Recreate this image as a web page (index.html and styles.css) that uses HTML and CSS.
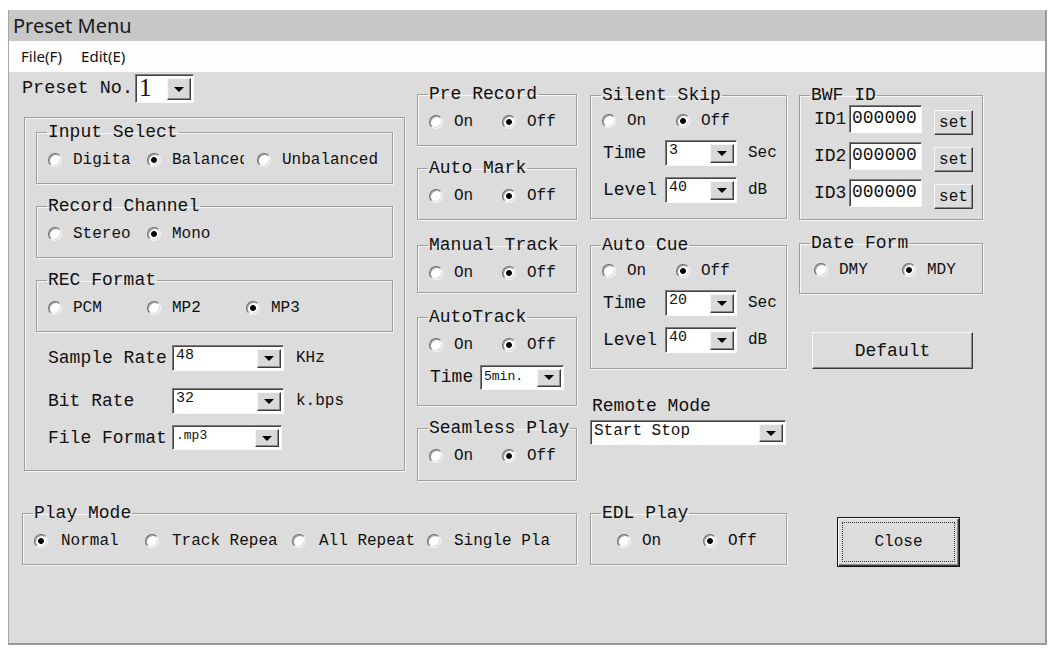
FILE: index.html
```html
<!DOCTYPE html>
<html lang="en">
<head>
    <meta charset="UTF-8">
    <meta name="viewport" content="width=device-width, initial-scale=1.0">
    <title>Preset Menu</title>
    <link rel="stylesheet" href="styles.css">
</head>
<body>
<div class="window">
    <div class="titlebar">Preset Menu</div>
    <div class="menubar"><span>File(F)</span><span>Edit(E)</span></div>

    <div class="client">
        <div class="top">
            <!-- left column -->
            <div class="col col-left">
                <div class="preset">
                    <span class="preset-label">Preset No.</span>
                    <div class="combo combo-preset"><span class="val">1</span><span class="drop"></span></div>
                </div>
                <div class="panel">
                    <fieldset class="grp">
                        <legend>Input Select</legend>
                        <div class="row">
                            <label class="opt w-digital"><input type="radio" name="input"><span>Digital</span></label>
                            <label class="opt w-balanced"><input type="radio" name="input" checked><span>Balanced</span></label>
                            <label class="opt"><input type="radio" name="input"><span>Unbalanced</span></label>
                        </div>
                    </fieldset>
                    <fieldset class="grp">
                        <legend>Record Channel</legend>
                        <div class="row">
                            <label class="opt w99"><input type="radio" name="channel"><span>Stereo</span></label>
                            <label class="opt"><input type="radio" name="channel" checked><span>Mono</span></label>
                        </div>
                    </fieldset>
                    <fieldset class="grp">
                        <legend>REC Format</legend>
                        <div class="row">
                            <label class="opt w99"><input type="radio" name="format"><span>PCM</span></label>
                            <label class="opt w99"><input type="radio" name="format"><span>MP2</span></label>
                            <label class="opt"><input type="radio" name="format" checked><span>MP3</span></label>
                        </div>
                    </fieldset>

                    <div class="field-row fr-sample">
                        <span class="field-label">Sample Rate</span>
                        <div class="combo combo-rate"><span class="val">48</span><span class="drop"></span></div>
                        <span class="unit">KHz</span>
                    </div>
                    <div class="field-row fr-bit">
                        <span class="field-label">Bit Rate</span>
                        <div class="combo combo-rate"><span class="val">32</span><span class="drop"></span></div>
                        <span class="unit">k.bps</span>
                    </div>
                    <div class="field-row fr-file">
                        <span class="field-label">File Format</span>
                        <div class="combo combo-file"><span class="val">.mp3</span><span class="drop"></span></div>
                    </div>
                </div>
            </div>

            <!-- second column -->
            <div class="col col-mid">
                <fieldset class="grp">
                    <legend>Pre Record</legend>
                    <div class="row">
                        <label class="opt w73"><input type="radio" name="pre"><span>On</span></label>
                        <label class="opt"><input type="radio" name="pre" checked><span>Off</span></label>
                    </div>
                </fieldset>
                <fieldset class="grp g-automark">
                    <legend>Auto Mark</legend>
                    <div class="row">
                        <label class="opt w73"><input type="radio" name="mark"><span>On</span></label>
                        <label class="opt"><input type="radio" name="mark" checked><span>Off</span></label>
                    </div>
                </fieldset>
                <fieldset class="grp g-manual">
                    <legend>Manual Track</legend>
                    <div class="row">
                        <label class="opt w73"><input type="radio" name="manual"><span>On</span></label>
                        <label class="opt"><input type="radio" name="manual" checked><span>Off</span></label>
                    </div>
                </fieldset>
                <fieldset class="grp g-autotrack">
                    <legend>AutoTrack</legend>
                    <div class="row">
                        <label class="opt w73"><input type="radio" name="autotrack"><span>On</span></label>
                        <label class="opt"><input type="radio" name="autotrack" checked><span>Off</span></label>
                    </div>
                    <div class="sub-row">
                        <span class="sub-label w50">Time</span>
                        <div class="combo combo-min"><span class="val">5min.</span><span class="drop"></span></div>
                    </div>
                </fieldset>
                <fieldset class="grp g-seamless">
                    <legend>Seamless Play</legend>
                    <div class="row">
                        <label class="opt w73"><input type="radio" name="seamless"><span>On</span></label>
                        <label class="opt"><input type="radio" name="seamless" checked><span>Off</span></label>
                    </div>
                </fieldset>
            </div>

            <!-- third column -->
            <div class="col col-third">
                <fieldset class="grp g-tall">
                    <legend>Silent Skip</legend>
                    <div class="row">
                        <label class="opt w74"><input type="radio" name="skip"><span>On</span></label>
                        <label class="opt"><input type="radio" name="skip" checked><span>Off</span></label>
                    </div>
                    <div class="sub-row">
                        <span class="sub-label">Time</span>
                        <div class="combo combo-small"><span class="val">3</span><span class="drop"></span></div>
                        <span class="unit">Sec</span>
                    </div>
                    <div class="sub-row sub-level">
                        <span class="sub-label">Level</span>
                        <div class="combo combo-small"><span class="val">40</span><span class="drop"></span></div>
                        <span class="unit">dB</span>
                    </div>
                </fieldset>
                <fieldset class="grp g-tall g-cue">
                    <legend>Auto Cue</legend>
                    <div class="row">
                        <label class="opt w74"><input type="radio" name="cue"><span>On</span></label>
                        <label class="opt"><input type="radio" name="cue" checked><span>Off</span></label>
                    </div>
                    <div class="sub-row">
                        <span class="sub-label">Time</span>
                        <div class="combo combo-small"><span class="val">20</span><span class="drop"></span></div>
                        <span class="unit">Sec</span>
                    </div>
                    <div class="sub-row sub-level">
                        <span class="sub-label">Level</span>
                        <div class="combo combo-small"><span class="val">40</span><span class="drop"></span></div>
                        <span class="unit">dB</span>
                    </div>
                </fieldset>
                <div class="remote">
                    <div class="remote-label">Remote Mode</div>
                    <div class="combo combo-remote"><span class="val">Start Stop</span><span class="drop"></span></div>
                </div>
            </div>

            <!-- fourth column -->
            <div class="col col-right">
                <fieldset class="grp g-bwf">
                    <legend>BWF ID</legend>
                    <div class="id-row">
                        <span class="id-label">ID1</span>
                        <div class="id-field">000000</div>
                        <button class="btn btn-set">set</button>
                    </div>
                    <div class="id-row">
                        <span class="id-label">ID2</span>
                        <div class="id-field">000000</div>
                        <button class="btn btn-set">set</button>
                    </div>
                    <div class="id-row">
                        <span class="id-label">ID3</span>
                        <div class="id-field">000000</div>
                        <button class="btn btn-set">set</button>
                    </div>
                </fieldset>
                <fieldset class="grp g-date">
                    <legend>Date Form</legend>
                    <div class="row">
                        <label class="opt w88"><input type="radio" name="date"><span>DMY</span></label>
                        <label class="opt"><input type="radio" name="date" checked><span>MDY</span></label>
                    </div>
                </fieldset>
                <button class="btn btn-default">Default</button>
            </div>
        </div>

        <div class="bottom">
            <fieldset class="grp g-play">
                <legend>Play Mode</legend>
                <div class="row row-play">
                    <label class="opt w111"><input type="radio" name="play" checked><span>Normal</span></label>
                    <label class="opt w-track"><input type="radio" name="play"><span>Track Repeat</span></label>
                    <label class="opt w135"><input type="radio" name="play"><span>All Repeat</span></label>
                    <label class="opt w-single"><input type="radio" name="play"><span>Single Play</span></label>
                </div>
            </fieldset>
            <fieldset class="grp g-edl">
                <legend>EDL Play</legend>
                <div class="row row-edl">
                    <label class="opt w86"><input type="radio" name="edl"><span>On</span></label>
                    <label class="opt"><input type="radio" name="edl" checked><span>Off</span></label>
                </div>
            </fieldset>
            <button class="btn btn-close"><span>Close</span></button>
        </div>
    </div>
</div>
</body>
</html>
```

FILE: styles.css
```css
* {
    box-sizing: border-box;
}
body {
    margin: 0;
    background: #fff;
    font-family: "Liberation Mono", "DejaVu Sans Mono", monospace;
    color: #111;
}

/* window frame */
.window {
    margin: 10px 0 0 8px;
    width: 1039px;
    height: 635px;
    border-left: 1px solid #a6a6a6;
    border-right: 2px solid #9a9a9a;
    border-bottom: 2px solid #9a9a9a;
    background: #dcdcdc;
}
.titlebar {
    height: 31px;
    line-height: 31px;
    padding-left: 4px;
    background: #c8c8c8;
    font-family: "Noto Sans", "Open Sans", sans-serif;
    font-size: 20px;
    color: #1a1a1a;
}
.menubar {
    height: 31px;
    line-height: 31px;
    padding-left: 12px;
    background: #fdfdfd;
    font-family: "Noto Sans", "Open Sans", sans-serif;
    font-size: 15px;
    display: flex;
    gap: 19px;
}

.client {
    height: 571px;
    padding-left: 13px;
}
.top {
    display: grid;
    grid-template-columns: 383px 161px 197px 184px;
    column-gap: 12px;
    align-items: start;
    height: 408px;
}
.col {
    display: flex;
    flex-direction: column;
    align-items: flex-start;
}

/* group boxes */
.grp {
    margin: 0;
    padding: 9px 0 13px 0;
    min-width: 0;
    border: 1px solid #9e9e9e;
    box-shadow: 1px 1px 0 #f7f7f7, inset 1px 1px 0 #f7f7f7;
}
.grp legend {
    margin-left: 10px;
    padding: 0 1px;
    font-size: 18px;
    line-height: 18px;
}
.row {
    display: flex;
    align-items: center;
    height: 20px;
    padding-left: 11px;
    font-size: 16px;
}
.opt {
    display: flex;
    align-items: center;
    flex: none;
    overflow: hidden;
    white-space: nowrap;
}
.opt input {
    appearance: none;
    -webkit-appearance: none;
    flex: none;
    width: 14px;
    height: 14px;
    margin: 0 11px 0 0;
    border-radius: 50%;
    border: 1px solid;
    border-color: #6c6c6c #f4f4f4 #f4f4f4 #6c6c6c;
    background: #fff;
    box-shadow: inset 1px 1px 0 #9a9a9a, inset -1px -1px 0 #dadada;
}
.opt input:checked {
    background: radial-gradient(circle, #000 2.5px, #fff 3.3px);
}
.w-digital { width: 84px; margin-right: 15px; }
.w-balanced { width: 97px; margin-right: 13px; }
.w99 { width: 99px; }
.w73 { width: 73px; }
.w74 { width: 74px; }
.w86 { width: 86px; }
.w88 { width: 88px; }
.w111 { width: 111px; }
.w-track { width: 134px; margin-right: 13px; }
.w135 { width: 135px; }
.w-single { width: 124px; }
.row-play input { margin-right: 13px; }

/* combo boxes */
.combo {
    display: flex;
    flex: none;
    background: #fff;
    border: 1px solid;
    border-color: #7c7c7c #fafafa #fafafa #7c7c7c;
    box-shadow: inset 1px 1px 0 #444;
}
.combo .val {
    flex: 1;
    overflow: hidden;
    white-space: nowrap;
    padding: 2px 0 0 3px;
    font-size: 15px;
    line-height: 15px;
}
.combo .drop {
    flex: none;
    width: 24px;
    margin: 3px 2px 2px 0;
    background: #d9d9d9;
    border: 1px solid;
    border-color: #f6f6f6 #3c3c3c #3c3c3c #f6f6f6;
    box-shadow: inset -1px -1px 0 #8a8a8a;
    display: flex;
    align-items: center;
    justify-content: center;
}
.combo .drop::after {
    content: "";
    border-left: 5px solid transparent;
    border-right: 5px solid transparent;
    border-top: 5px solid #000;
}

/* left column */
.col-left {
    margin-top: 2px;
}
.preset {
    display: flex;
    align-items: center;
    height: 29px;
}
.preset-label {
    font-size: 18.5px;
    width: 113px;
}
.combo-preset {
    width: 59px;
    height: 29px;
}
.combo-preset .val {
    font-family: "Liberation Serif", serif;
    font-size: 25px;
    line-height: 24px;
    padding: 1px 0 0 3px;
}
.panel {
    margin: 14px 0 0 2px;
    width: 381px;
    padding: 5px 11px 20px 11px;
    border: 1px solid #9e9e9e;
    box-shadow: 1px 1px 0 #f7f7f7, inset 1px 1px 0 #f7f7f7;
}
.panel .grp {
    width: 357px;
    margin-bottom: 13px;
}
.field-row {
    display: flex;
    align-items: center;
    height: 26px;
    padding-left: 12px;
}
.fr-sample { margin-top: 7px; }
.fr-bit { margin-top: 17px; }
.fr-file { margin-top: 11px; height: 25px; }
.field-label {
    width: 124px;
    font-size: 18px;
}
.combo-rate {
    width: 112px;
    height: 26px;
}
.combo-file {
    width: 110px;
    height: 25px;
}
.combo-file .val {
    font-size: 13px;
}
.unit {
    margin-left: 12px;
    font-size: 16px;
}

/* second column */
.col-mid {
    margin-top: 13px;
}
.col-mid .grp {
    width: 160px;
}
.g-automark { margin-top: 13px; }
.g-manual { margin-top: 16px; padding-bottom: 9px; }
.g-autotrack { margin-top: 15px; padding-bottom: 15px; }
.g-seamless { margin-top: 13px; padding-bottom: 14px; }
.sub-row {
    display: flex;
    align-items: center;
    padding-left: 12px;
    margin-top: 9px;
    height: 26px;
}
.sub-label {
    width: 62px;
    font-size: 18px;
}
.sub-label.w50 {
    width: 50px;
}
.combo-min {
    width: 84px;
    height: 25px;
}
.combo-min .val {
    font-size: 13px;
    padding-top: 3px;
}

/* third column */
.col-third {
    margin-top: 14px;
}
.col-third .grp {
    width: 197px;
}
.g-tall {
    padding: 7px 0 15px 0;
}
.sub-level {
    margin-top: 11px;
}
.g-cue {
    margin-top: 17px;
}
.combo-small {
    width: 72px;
    height: 26px;
}
.sub-row .unit {
    margin-left: 11px;
}
.remote {
    margin-top: 28px;
}
.remote-label {
    font-size: 18px;
    line-height: 18px;
    padding-left: 2px;
}
.combo-remote {
    margin-top: 5px;
    width: 196px;
    height: 25px;
}
.combo-remote .val {
    font-size: 16px;
    line-height: 16px;
}

/* right column */
.col-right {
    margin-top: 14px;
}
.col-right .grp {
    width: 184px;
}
.g-bwf {
    padding: 1px 0 12px 0;
}
.id-row {
    display: flex;
    align-items: flex-start;
    padding-left: 14px;
    height: 28px;
}
.id-row + .id-row {
    margin-top: 9px;
}
.id-label {
    width: 35px;
    font-size: 18px;
    line-height: 28px;
}
.id-field {
    width: 73px;
    height: 28px;
    padding: 3px 0 0 2px;
    background: #fff;
    font-size: 18px;
    line-height: 18px;
    border: 1px solid;
    border-color: #7c7c7c #fafafa #fafafa #7c7c7c;
    box-shadow: inset 1px 1px 0 #444;
}
.btn {
    font-family: "Liberation Mono", "DejaVu Sans Mono", monospace;
    color: #111;
    background: #dcdcdc;
    border: 1px solid;
    border-color: #f8f8f8 #3c3c3c #3c3c3c #f8f8f8;
    box-shadow: inset -1px -1px 0 #8a8a8a;
    padding: 0;
}
.btn-set {
    margin: 5px 0 0 12px;
    width: 39px;
    height: 25px;
    font-size: 16px;
}
.g-date {
    margin-top: 14px;
    padding: 8px 0 13px 0;
}
.g-date .row {
    padding-left: 14px;
}
.btn-default {
    margin: 38px 0 0 13px;
    width: 161px;
    height: 37px;
    font-size: 18px;
}

/* bottom row */
.bottom {
    display: flex;
    align-items: flex-start;
    margin-top: 24px;
}
.g-play {
    width: 555px;
}
.g-edl {
    width: 197px;
    margin-left: 13px;
}
.row-edl {
    padding-left: 26px;
}
.btn-close {
    margin: 13px 0 0 50px;
    width: 123px;
    height: 50px;
    font-size: 16px;
    border: 1px solid #111;
    box-shadow: inset 1px 1px 0 #f8f8f8, inset -1px -1px 0 #3c3c3c, inset -2px -2px 0 #8a8a8a;
    padding: 4px;
}
.btn-close span {
    display: flex;
    align-items: center;
    justify-content: center;
    height: 100%;
    border: 1px dotted #333;
}
```
